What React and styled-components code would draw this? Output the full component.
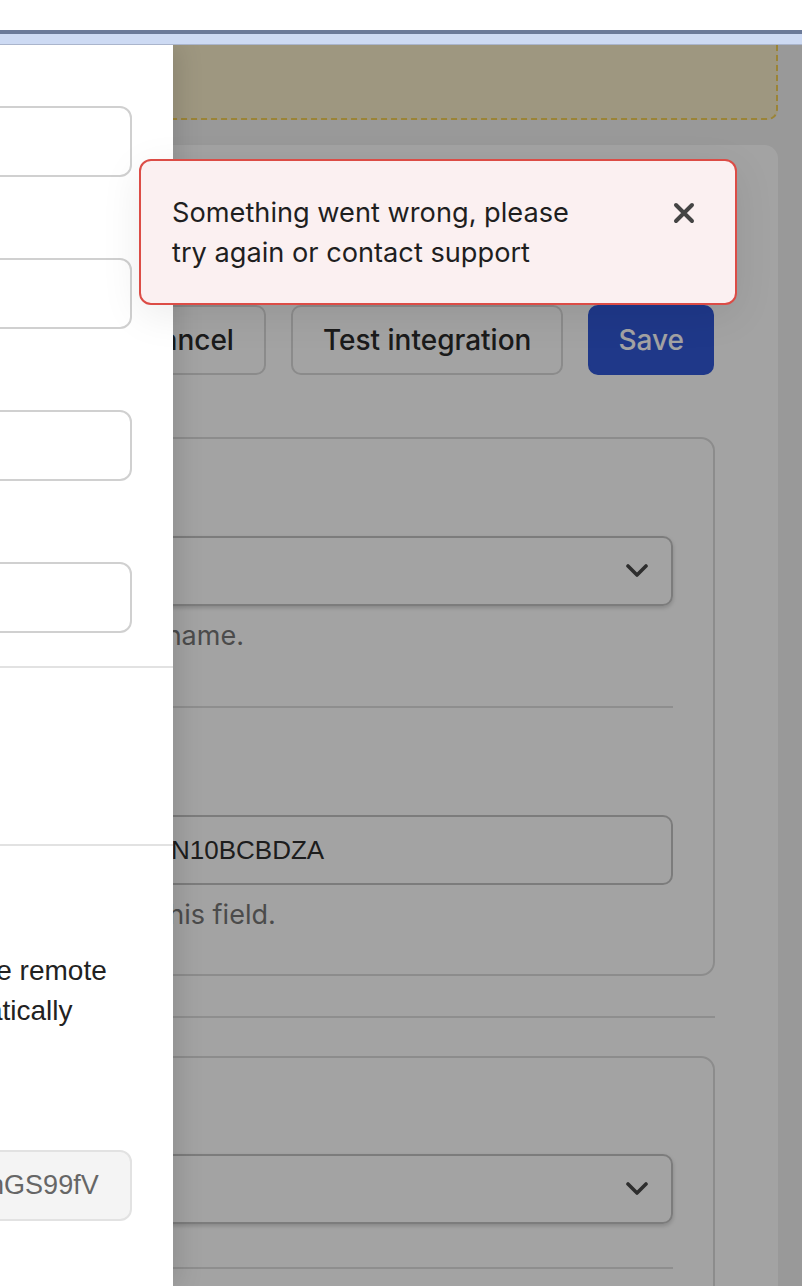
import React from 'react'
import styled, { createGlobalStyle } from 'styled-components'

const GlobalStyle = createGlobalStyle`
  html, body {
    margin: 0;
    padding: 0;
    height: 100%;
    overflow: hidden;
  }
  body {
    font-family: Inter, "Noto Sans", sans-serif;
    color: #222;
    background: #fff;
  }
  #root {
    height: 100%;
  }
  * {
    box-sizing: border-box;
  }
`

// the screenshot is a crop of a wider window, so the window is pinned to the right edge
const Viewport = styled.div`
  height: 100vh;
  width: 100vw;
  display: flex;
  justify-content: flex-end;
  overflow: hidden;
`

const Window = styled.div`
  flex: 0 0 1100px;
  width: 1100px;
  height: 100%;
  display: flex;
  flex-direction: column;
`

const TopBar = styled.header`
  height: 45px;
  flex-shrink: 0;
  background: #fff;
  display: flex;
  flex-direction: column;
  justify-content: flex-end;
`

const TabStrip = styled.div`
  height: 15px;
  background: #cddaf3;
  border-top: 4px solid #6b7a99;
  border-bottom: 1px solid #aab5cc;
`

const Stage = styled.div`
  position: relative;
  flex: 1;
  overflow: hidden;
  background: #f0f0f0;
`

const Page = styled.main`
  padding: 0 24px;
  display: flex;
  flex-direction: column;
`

const Notice = styled.div`
  height: 75px;
  margin-bottom: 25px;
  background: #f7edc8;
  border: 2px dashed #f3cf55;
  border-top: none;
  border-radius: 0 0 10px 10px;
`

const Card = styled.section`
  background: #fff;
  border-radius: 14px;
  padding: 32px 63px 0 64px;
  display: flex;
  flex-direction: column;
`

const CardHead = styled.div`
  height: 80px;
  margin-bottom: 48px;
  font-size: 26px;
  line-height: 40px;
  color: #2e2e2e;
  h2 {
    margin: 0;
    font-size: 28px;
    font-weight: 600;
    line-height: 40px;
  }
`

const ButtonRow = styled.div`
  display: flex;
  justify-content: flex-end;
  gap: 25px;
  padding-right: 1px;
  margin-bottom: 62px;
`

const Button = styled.button`
  height: 70px;
  padding: 0 ${p => (p.$primary ? '28px' : '30px')};
  border-radius: 10px;
  border: 2px solid ${p => (p.$primary ? '#3158d6' : '#d9d9d9')};
  background: ${p => (p.$primary ? '#3158d6' : '#fff')};
  color: ${p => (p.$primary ? '#fff' : '#2b2b2b')};
  font-family: Inter, sans-serif;
  font-size: 28px;
  font-weight: 500;
`

const Fieldset = styled.div`
  border: 2px solid #dcdcdc;
  border-radius: 14px;
  padding: ${p => p.$pad || '49px 40px 43px'};
`

const Label = styled.div`
  font-size: 27px;
  line-height: 32px;
  margin-bottom: 16px;
  color: #2e2e2e;
`

const SelectBox = styled.div`
  height: 70px;
  display: flex;
  align-items: center;
  justify-content: space-between;
  padding: 0 23px 0 22px;
  border: 2px solid #c3c3c3;
  border-radius: 10px;
  box-shadow: 0 2px 4px rgba(0, 0, 0, 0.18);
  font-family: "Liberation Sans", Arial, sans-serif;
  font-size: 26px;
  color: #2e2e2e;
`

const TextBox = styled.div`
  height: 70px;
  display: flex;
  align-items: center;
  padding: 0 22px;
  border: 2px solid #c3c3c3;
  border-radius: 10px;
  font-family: "Liberation Sans", Arial, sans-serif;
  font-size: 26px;
  color: #2e2e2e;
  white-space: nowrap;
  overflow: hidden;
`

const Help = styled.div`
  margin-top: 14px;
  font-size: 27px;
  line-height: 32px;
  color: #767676;
  white-space: nowrap;
`

const Rule = styled.div`
  height: 2px;
  background: #dedede;
  margin: ${p => p.$m || '0'};
`

const Backdrop = styled.div`
  position: absolute;
  inset: 0;
  background: rgba(0, 0, 0, 0.36);
  z-index: 1;
`

const Drawer = styled.aside`
  position: absolute;
  top: 0;
  left: 0;
  bottom: 0;
  width: 471px;
  background: #fff;
  box-shadow: 6px 0 24px rgba(0, 0, 0, 0.12);
  z-index: 2;
  display: flex;
  flex-direction: column;
  font-family: "Liberation Sans", Arial, sans-serif;
  font-size: 28px;
  color: #222;
`

const DrawerSection = styled.div`
  padding: ${p => p.$pad || '0 41px 0 25px'};
  display: flex;
  flex-direction: column;
  gap: ${p => p.$gap || '0px'};
`

const DrawerRule = styled.div`
  height: 2px;
  background: #e2e2e2;
`

const DField = styled.label`
  display: flex;
  flex-direction: column;
`

const DLabel = styled.span`
  line-height: 32px;
  margin-bottom: 16px;
`

const DInput = styled.input`
  height: 71px;
  width: 100%;
  padding: 0 20px;
  border: 2px solid ${p => (p.disabled ? '#e2e2e2' : '#d0d0d0')};
  border-radius: 12px;
  background: ${p => (p.disabled ? '#f4f4f4' : '#fff')};
  color: #666;
  font-family: "Liberation Sans", Arial, sans-serif;
  font-size: 27px;
  outline: none;
`

const Line = styled.div`
  line-height: ${p => p.$lh || '40px'};
  white-space: nowrap;
  color: ${p => (p.$muted ? '#777' : '#222')};
`

const Para = styled.p`
  margin: 33px 0 31px;
  line-height: 40px;
  white-space: nowrap;
`

const Toast = styled.div`
  position: absolute;
  top: 114px;
  right: 65px;
  width: 598px;
  z-index: 3;
  display: flex;
  align-items: flex-start;
  justify-content: space-between;
  padding: 32px 31px 30px 31px;
  background: #fbf0f1;
  border: 2px solid #dc4c46;
  border-radius: 12px;
  box-shadow: 0 10px 40px rgba(0, 0, 0, 0.08);
`

const Message = styled.div`
  max-width: 424px;
  font-size: 27.2px;
  line-height: 40px;
  color: #1f1f1f;
`

const CloseButton = styled.button`
  width: 40px;
  height: 40px;
  padding: 0;
  border: none;
  background: transparent;
  display: flex;
  align-items: center;
  justify-content: center;
  color: #444;
`

function Chevron() {
  return (
    <svg width="22" height="14" viewBox="0 0 22 14" fill="none">
      <polyline points="2,2 11,11 20,2" stroke="#494949" strokeWidth="3.6" strokeLinecap="round" strokeLinejoin="round" />
    </svg>
  )
}

function CloseIcon() {
  return (
    <svg width="22" height="22" viewBox="0 0 22 22" fill="none">
      <path d="M3 3 L19 19 M19 3 L3 19" stroke="currentColor" strokeWidth="4" strokeLinecap="round" />
    </svg>
  )
}

export default function App() {
  return (
    <>
      <GlobalStyle />
      <Viewport>
        <Window>
          <TopBar>
            <TabStrip />
          </TopBar>
          <Stage>
            <Page>
              <Notice />
              <Card>
                <CardHead>
                  <h2>Integration</h2>
                  <div>Settings</div>
                </CardHead>
                <ButtonRow>
                  <Button>Cancel</Button>
                  <Button>Test integration</Button>
                  <Button $primary>Save</Button>
                </ButtonRow>

                <Fieldset>
                  <Label>Account</Label>
                  <SelectBox>
                    <span>Main</span>
                    <Chevron />
                  </SelectBox>
                  <Help>Pick the workspace by its name.</Help>
                  <Rule $m="54px 0 59px" />
                  <Label>Key</Label>
                  <TextBox>AKIAQX7YV4T2RJPMW51N10BCBDZA</TextBox>
                  <Help>Leave this empty to keep this field.</Help>
                </Fieldset>

                <Rule $m="40px 0 38px" />

                <Fieldset $pad="48px 40px 43px">
                  <Label>Region</Label>
                  <SelectBox>
                    <span>EU</span>
                    <Chevron />
                  </SelectBox>
                  <Rule $m="43px 0 0" />
                </Fieldset>
              </Card>
            </Page>

            <Backdrop />

            <Drawer>
              <DrawerSection $pad="13px 41px 33px 25px" $gap="33px">
                <DField>
                  <DLabel>Name</DLabel>
                  <DInput />
                </DField>
                <DField>
                  <DLabel>Host</DLabel>
                  <DInput />
                </DField>
                <DField>
                  <DLabel>User</DLabel>
                  <DInput />
                </DField>
                <DField>
                  <DLabel>Token</DLabel>
                  <DInput />
                </DField>
              </DrawerSection>
              <DrawerRule />
              <DrawerSection $pad="48px 41px 48px 25px">
                <Line>Sync</Line>
                <Line $muted>Off</Line>
              </DrawerSection>
              <DrawerRule />
              <DrawerSection $pad="40px 41px 0 25px">
                <Line $lh="32px">Webhook</Line>
                <Para>
                  Add this secret into the remote
                  <br />
                  endpoint, so it automatically
                  <br />
                  verifies each call.
                </Para>
                <DField>
                  <DLabel>Secret</DLabel>
                  <DInput disabled value="whsec_rT4xqmBr7anGS99fV" readOnly />
                </DField>
              </DrawerSection>
            </Drawer>

            <Toast role="alert">
              <Message>Something went wrong, please try again or contact support</Message>
              <CloseButton aria-label="Close">
                <CloseIcon />
              </CloseButton>
            </Toast>
          </Stage>
        </Window>
      </Viewport>
    </>
  )
}
